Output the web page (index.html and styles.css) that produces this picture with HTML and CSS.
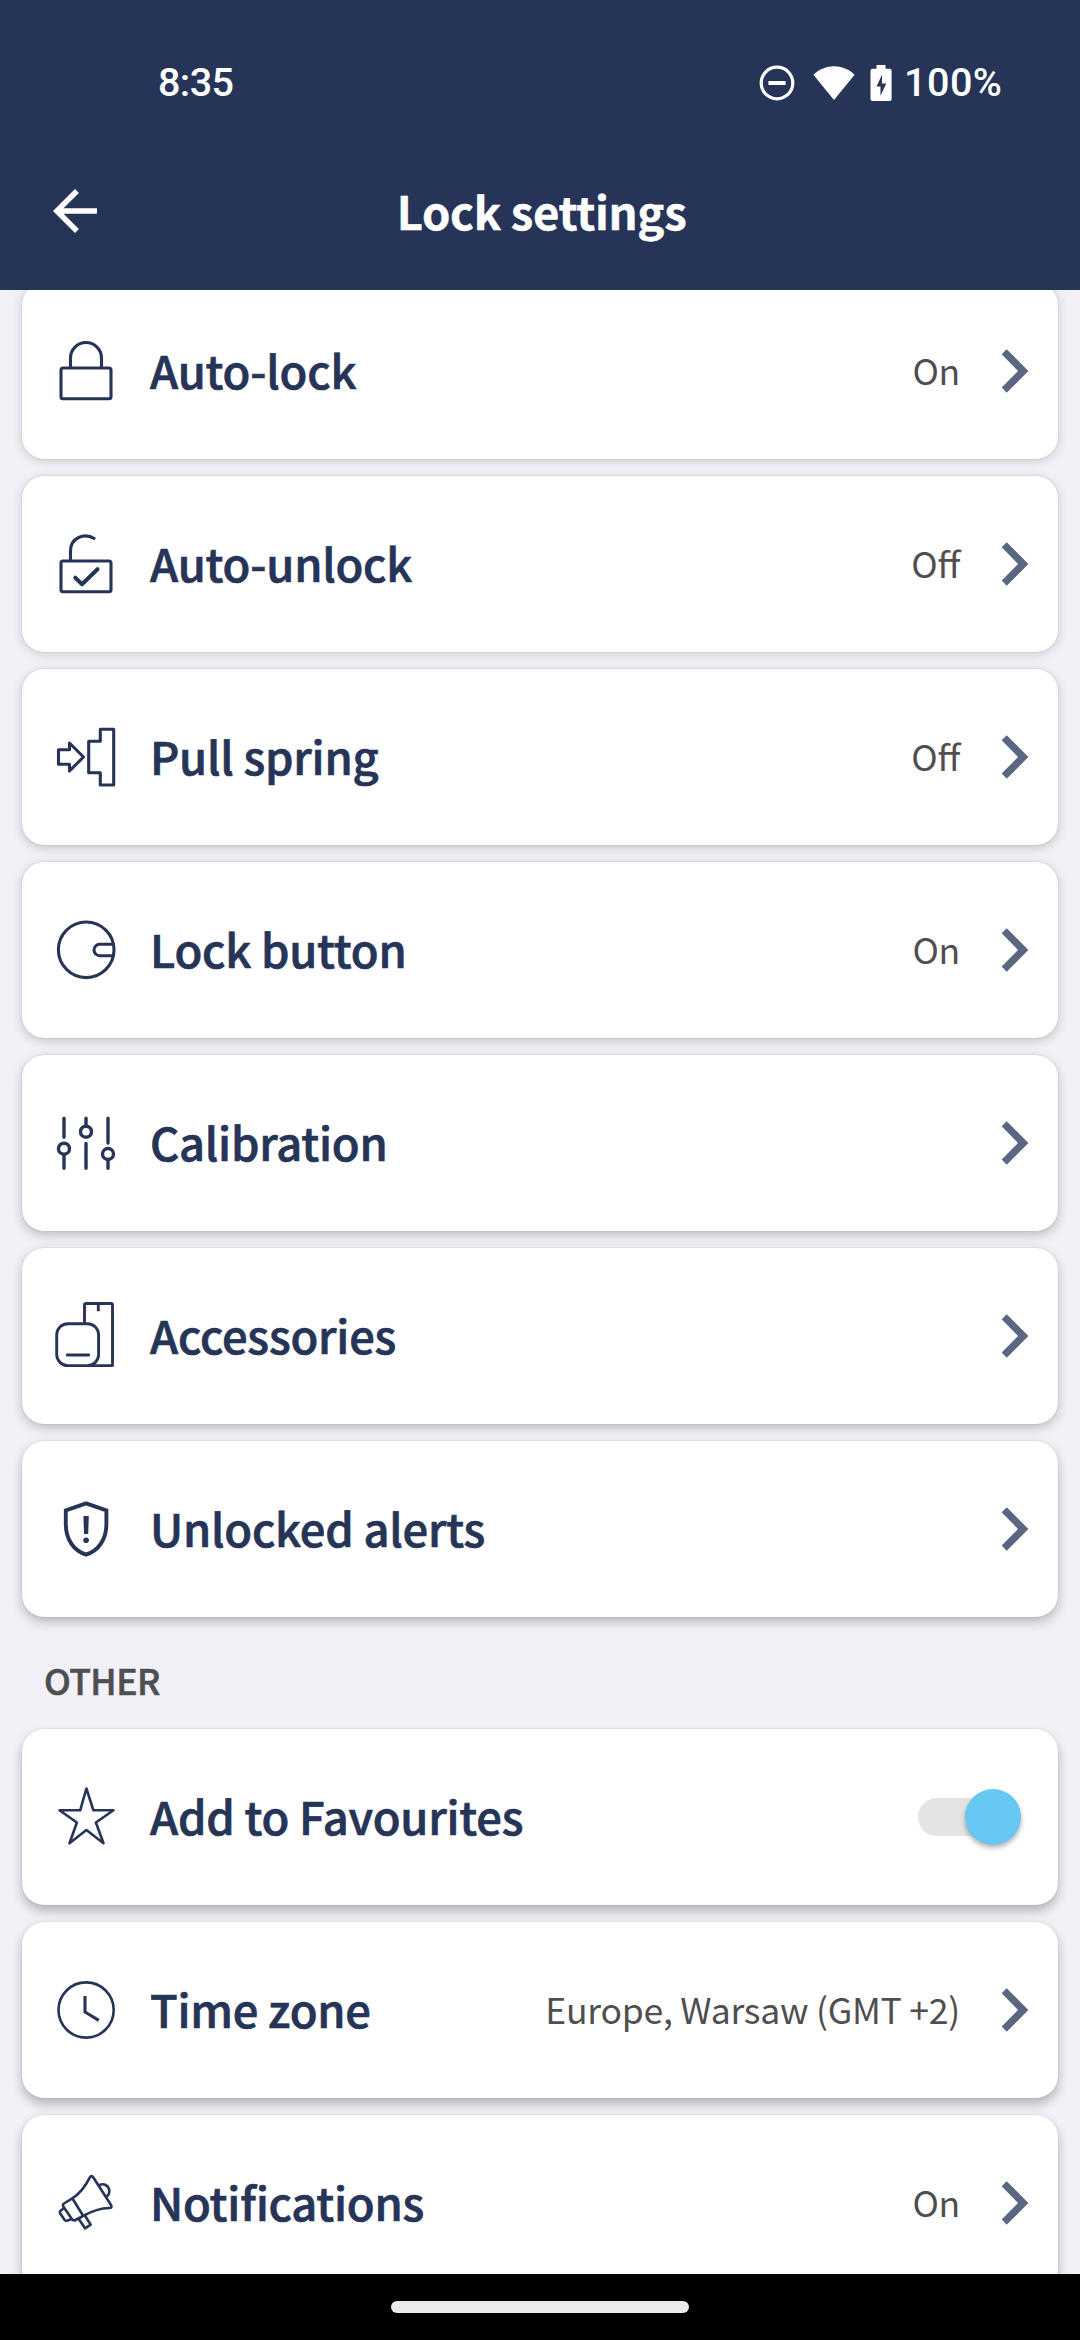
FILE: index.html
```html
<!DOCTYPE html>
<html lang="en">
<head>
<meta charset="utf-8">
<title>Lock settings</title>
<link rel="stylesheet" href="styles.css">
</head>
<body>
<header class="header">
  <div class="status">
    <span class="clock">8:35</span>
    <div class="status-icons">
      <svg class="dnd" viewBox="0 0 36 36"><circle cx="18" cy="18" r="15.8" fill="none" stroke="#fff" stroke-width="3.2"/><path d="M9.4 18h17.2" stroke="#fff" stroke-width="4"/></svg>
      <svg class="wifi" viewBox="0 0 42 34"><path d="M.4 8.8C12-2.6 30-2.6 41.600 8.800L21 34Z" fill="#fff"/></svg>
      <svg class="battery" viewBox="0 0 22 36"><path fill="#fff" fill-rule="evenodd" d="M6.500 0h9v3.700h4.100a2 2 0 0 1 2 2V34a2 2 0 0 1-2 2H2.500a2 2 0 0 1-2-2V5.700a2 2 0 0 1 2-2h4ZM12 9.500 6.600 21.500h3.900v9.300L16.300 18.500H12Z"/></svg>
      <span class="percent">100%</span>
    </div>
  </div>
  <div class="toolbar">
    <svg class="back" viewBox="4 4 16 16"><path fill="#fff" d="M20 11H7.830l5.590-5.590L12 4l-8 8 8 8 1.410-1.410L7.830 13H20z"/></svg>
    <h1 class="title">Lock settings</h1>
  </div>
</header>

<main class="content">
  <section class="list">
    <div class="card lift-1">
      <svg class="icon" viewBox="0 0 66 66"><rect x="8" y="30" width="50" height="30.700" rx="2"/><path d="M17.500 30V20a15.500 15.500 0 0 1 31 0v10"/></svg>
      <span class="label">Auto-lock</span><span class="value">On</span>
      <svg class="chevron" viewBox="0 0 28 44"><path d="M.7 5.200 5.700.2 27.400 22 5.700 43.800.7 38.500 17 22Z"/></svg>
    </div>
    <div class="card lift-1">
      <svg class="icon" viewBox="0 0 66 66"><rect x="8" y="30" width="50" height="30.700" rx="2"/><path d="M17.500 30V20C17.500 7 31 1 42.200 8"/><path stroke-width="4" stroke-linecap="round" d="M22.300 46.700 29 53.200 44.500 38.200"/></svg>
      <span class="label">Auto-unlock</span><span class="value">Off</span>
      <svg class="chevron" viewBox="0 0 28 44"><path d="M.7 5.200 5.700.2 27.400 22 5.700 43.800.7 38.500 17 22Z"/></svg>
    </div>
    <div class="card lift-2">
      <svg class="icon" viewBox="0 0 66 66"><path d="M5.500 25.700H16.500V19L30.500 33 16.500 47V40.300H5.500ZM35.700 17.300H47.300V5.300H60.700V61H47.300V48.700H35.700Z"/></svg>
      <span class="label">Pull spring</span><span class="value">Off</span>
      <svg class="chevron" viewBox="0 0 28 44"><path d="M.7 5.200 5.700.2 27.400 22 5.700 43.800.7 38.500 17 22Z"/></svg>
    </div>
    <div class="card lift-2">
      <svg class="icon" viewBox="0 0 66 66"><circle cx="33.200" cy="32.800" r="27.800"/><path d="M60.500 27.300H46.700a5.700 5.700 0 0 0 0 11.400H60.500"/></svg>
      <span class="label">Lock button</span><span class="value">On</span>
      <svg class="chevron" viewBox="0 0 28 44"><path d="M.7 5.200 5.700.2 27.400 22 5.700 43.800.7 38.500 17 22Z"/></svg>
    </div>
    <div class="card lift-3">
      <svg class="icon" viewBox="0 0 66 66"><g stroke-width="3.400" stroke-linecap="round"><path d="M11 8.200V27.200M11 44.500V58.200M33 8.200V16M33 33.400V58.200M55 8.200V33M55 49.500V58.200"/><circle cx="11" cy="38.700" r="5.500"/><circle cx="33" cy="21.700" r="5.500"/><circle cx="55" cy="44" r="5.500"/></g></svg>
      <span class="label">Calibration</span>
      <svg class="chevron" viewBox="0 0 28 44"><path d="M.7 5.200 5.700.2 27.400 22 5.700 43.800.7 38.500 17 22Z"/></svg>
    </div>
    <div class="card lift-3">
      <svg class="icon" viewBox="0 0 66 66"><g stroke-width="2.900"><path d="M31.500 20.500V2a1.500 1.500 0 0 1 1.500-1.500H58A1.500 1.500 0 0 1 59.500 2V62.600H36M45.300 0V8.300"/><rect x="3.700" y="20.700" width="41.900" height="41.900" rx="11"/><path stroke-linecap="round" d="M14.300 52H35.700"/></g></svg>
      <span class="label">Accessories</span>
      <svg class="chevron" viewBox="0 0 28 44"><path d="M.7 5.200 5.700.2 27.400 22 5.700 43.800.7 38.500 17 22Z"/></svg>
    </div>
    <div class="card lift-4">
      <svg class="icon" viewBox="0 0 66 66"><path stroke-width="3.900" stroke-linejoin="miter" d="M33.100 7.300 53.400 14.500V28C53.400 43 46 54.500 33.100 58.600 20.200 54.500 12.800 43 12.800 28V14.500Z"/><path class="solid" d="M30.400 20H35.800L35.200 38H31Z"/><circle class="solid" cx="33.100" cy="44.300" r="2.800"/></svg>
      <span class="label">Unlocked alerts</span>
      <svg class="chevron" viewBox="0 0 28 44"><path d="M.7 5.200 5.700.2 27.400 22 5.700 43.800.7 38.500 17 22Z"/></svg>
    </div>
  </section>

  <h2 class="section-title">OTHER</h2>

  <section class="list">
    <div class="card lift-5">
      <svg class="icon" viewBox="0 0 66 66"><path stroke-width="2.600" d="M33.400 4.500 40.400 26.300H60.500L42.900 38.500 50.500 59.300 33.400 46 16.500 59.300 23.900 38.500 6.500 26.300H27.200Z"/></svg>
      <span class="label">Add to Favourites</span>
      <span class="switch"><span class="thumb"></span></span>
    </div>
    <div class="card lift-5">
      <svg class="icon" viewBox="0 0 66 66"><circle cx="33.100" cy="33" r="27.600" stroke-width="2.600"/><path d="M32 19V35L45.800 43.300"/></svg>
      <span class="label">Time zone</span><span class="value">Europe, Warsaw (GMT +2)</span>
      <svg class="chevron" viewBox="0 0 28 44"><path d="M.7 5.200 5.700.2 27.400 22 5.700 43.800.7 38.500 17 22Z"/></svg>
    </div>
    <div class="card lift-5">
      <svg class="icon" viewBox="0 0 66 66"><g stroke-width="2.600"><path d="M36.900 7.300Q38.500 5 40.200 7.300L58.300 35.500Q59 38 56.500 38C47 38.200 38 41.500 30 46L22.500 50Q20.300 51.200 19 49.300L10.300 36.500Q9.300 34.700 11 33.500L19.300 28.300C27 23.500 32.500 16 36.900 7.300Z"/><path d="M19.300 28.300 30.300 46M25.500 48.500 32 58.300 37.700 54.700 31.700 45.200M10.500 38.500 7.800 40.500Q6.300 41.800 7.200 43.500L11.500 49.700Q12.800 51.300 14.500 50.500L18.200 49.200M46.300 15C51.500 13 55 15.500 56.200 19.500 56.800 23 55.500 25.500 52.700 27"/></g></svg>
      <span class="label">Notifications</span><span class="value">On</span>
      <svg class="chevron" viewBox="0 0 28 44"><path d="M.7 5.200 5.700.2 27.400 22 5.700 43.800.7 38.500 17 22Z"/></svg>
    </div>
  </section>
</main>

<footer class="navbar"><span class="handle"></span></footer>
</body>
</html>
```

FILE: styles.css
```css
* { box-sizing: border-box; }

body {
  margin: 0;
  width: 1080px;
  height: 2340px;
  display: flex;
  flex-direction: column;
  overflow: hidden;
  background: #f2f1f7;
  color: #263457;
  font-family: "Noto Sans CJK SC", "Noto Sans", sans-serif;
}

svg { display: block; flex: none; overflow: visible; }

.header {
  flex: none;
  height: 290px;
  background: #263457;
  color: #fff;
}

.status {
  height: 165px;
  padding: 0 77px 0 158px;
  display: flex;
  justify-content: space-between;
  align-items: center;
  font: 500 39.5px/48px Roboto, sans-serif;
}

.clock { letter-spacing: -0.6px; }

.status-icons { display: flex; align-items: center; }
.dnd { width: 36px; height: 36px; margin-right: 18px; }
.wifi { width: 42px; height: 34px; margin-right: 15px; }
.battery { width: 22px; height: 36px; margin-right: 12px; }
.percent { width: 99px; letter-spacing: 0.5px; }

.toolbar {
  height: 92px;
  padding: 0 53px;
  display: grid;
  grid-template-columns: 44px 1fr 44px;
  align-items: center;
}

.back { width: 44px; height: 44px; }

.title {
  margin: 0 0 2px 3px;
  text-align: center;
  font-size: 45.500px;
  line-height: 66px;
  font-weight: 700;
  letter-spacing: -0.35px;
  -webkit-text-stroke: 0.4px #fff;
}

.content { flex: 1; min-height: 0; overflow: hidden; }

.list {
  display: flex;
  flex-direction: column;
  gap: 17px;
  padding: 0 22px;
}

.list:first-child { margin-top: -7px; }

.card {
  flex: none;
  height: 176px;
  padding: 0 29px 0 31px;
  display: flex;
  align-items: center;
  border-radius: 22px;
  background: #fff;
  box-shadow: 0 0 2px rgba(0, 0, 0, 0.14), 0 var(--drop) 11px rgba(0, 0, 0, var(--shade));
}

.lift-1 { --drop: 2px; --shade: 0.16; }
.lift-2 { --drop: 3px; --shade: 0.19; }
.lift-3 { --drop: 4px; --shade: 0.22; }
.lift-4 { --drop: 5px; --shade: 0.24; }
.lift-5 { --drop: 6px; --shade: 0.26; }

.icon {
  width: 66px;
  height: 66px;
  margin-right: 31px;
  fill: none;
  stroke: #263457;
  stroke-width: 3.100;
  stroke-linejoin: round;
}

.solid { fill: #263457; stroke: none; }

.label {
  flex: 1;
  margin-bottom: 5px;
  white-space: nowrap;
  font-size: 45.300px;
  line-height: 66px;
  font-weight: 500;
  letter-spacing: -0.23px;
  font-feature-settings: "liga" 1;
  -webkit-text-stroke: 0.7px #263457;
}

.value {
  margin: 0 41px 2px 0;
  white-space: nowrap;
  color: #4f4f4f;
  font-size: 35.600px;
  line-height: 52px;
  letter-spacing: -0.27px;
  font-feature-settings: "liga" 1;
}

.chevron { width: 28px; height: 44px; fill: #5b6781; }

.switch {
  width: 100px;
  height: 38px;
  margin-right: 11px;
  display: flex;
  align-items: center;
  justify-content: flex-end;
  border-radius: 19px;
  background: #e4e4e4;
}

.thumb {
  flex: none;
  width: 56px;
  height: 56px;
  margin-right: -3px;
  border-radius: 50%;
  background: #67c8f4;
  box-shadow: 0 3px 5px rgba(0, 0, 0, 0.3);
}

.section-title {
  margin: 0;
  height: 112px;
  padding: 37px 44px 0;
  color: #4f4f4f;
  font-size: 35.600px;
  line-height: 52px;
  font-weight: 500;
  letter-spacing: -0.6px;
  -webkit-text-stroke: 0.6px #4f4f4f;
}

.navbar {
  flex: none;
  height: 66px;
  display: flex;
  justify-content: center;
  padding-top: 27px;
  background: #000;
}

.handle { width: 298px; height: 12px; border-radius: 6px; background: #ebebeb; }
```
